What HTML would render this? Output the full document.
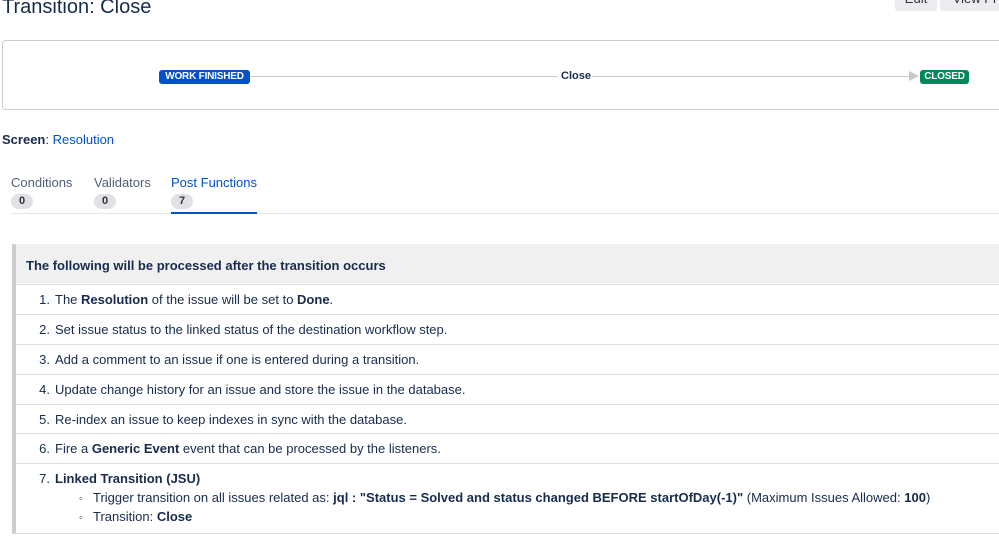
<!DOCTYPE html>
<html><head><style>
body{margin:0;width:999px;height:547px;overflow:hidden;background:#fff;font-family:"Liberation Sans",sans-serif;color:#172b4d;font-size:13px;position:relative}
.a{position:absolute}
h1{position:absolute;left:2px;top:-4px;margin:0;font-weight:normal;font-size:20px;color:#172b4d}
.btn{position:absolute;top:-8px;height:19px;background:#ebecf0;border-radius:3px;font-size:13px;color:#333;text-align:center;line-height:14px}
.lozenge{position:absolute;height:14px;line-height:14px;font-size:10px;font-weight:bold;color:#fff;border-radius:3px;top:70px;white-space:nowrap;text-align:center;letter-spacing:-0.2px}
.tab{position:absolute;top:175px;font-size:13px;color:#505f79}
.cnt{display:block;margin-top:4px;width:22px;height:15px;line-height:15px;text-align:center;border-radius:8px;background:#dfe1e6;font-size:11px;color:#333;font-weight:bold}
.tbl{position:absolute;left:12px;top:244px;width:1000px;height:288px;border-left:4px solid #ccc;border-top:1px solid #ddd;border-bottom:1px solid #ddd}
.row{position:absolute;left:0;right:0;border-top:1px solid #ddd}
.num{position:absolute;left:20px;width:14px;text-align:right}
.txt{position:absolute;left:39px;white-space:nowrap}
.sub{position:absolute;left:63px;white-space:nowrap}
.sub i{font-style:normal;display:inline-block;width:14px;font-size:11px}
</style></head><body>
<h1>Transition: Close</h1>
<div class="btn" style="left:895px;width:42px">Edit</div>
<div class="btn" style="left:940px;width:70px">View Pr</div>
<div class="a" style="left:2px;top:40px;width:1010px;height:68px;border:1px solid #ccc;border-radius:4px"></div>
<div class="a" style="left:250px;top:76px;width:308px;height:1px;background:#c8c8c8"></div>
<div class="a" style="left:592px;top:76px;width:318px;height:1px;background:#c8c8c8"></div>
<div class="a" style="left:909px;top:71px;width:0;height:0;border-left:10px solid #c8c8c8;border-top:5px solid transparent;border-bottom:5px solid transparent"></div>
<div class="lozenge" style="left:159px;width:91px;background:#0052cc">WORK FINISHED</div>
<div class="a" style="left:561px;top:70px;font-size:11px;font-weight:bold;color:#172b4d">Close</div>
<div class="lozenge" style="left:920px;width:49px;background:#00875a">CLOSED</div>
<div class="a" style="left:2px;top:132px"><b>Screen</b>: <span style="color:#0052cc">Resolution</span></div>
<div class="a" style="left:11px;top:213px;width:990px;height:1px;background:#e5e5e5"></div>
<div class="tab" style="left:11px">Conditions<span class="cnt">0</span></div>
<div class="tab" style="left:94px">Validators<span class="cnt">0</span></div>
<div class="tab" style="left:171px;color:#0052cc">Post Functions<span class="cnt">7</span></div>
<div class="a" style="left:171px;top:212px;width:86px;height:2px;background:#0052cc"></div>
<div class="tbl">
<div class="row" style="top:-1px;height:39px;background:#f0f0f0;border-top:none"><div class="a" style="left:10px;top:14px;font-weight:bold">The following will be processed after the transition occurs</div></div>
<div class="row" style="top:39px"><span class="num" style="top:7px">1.</span><span class="txt" style="top:7px">The <b>Resolution</b> of the issue will be set to <b>Done</b>.</span></div>
<div class="row" style="top:69px"><span class="num" style="top:7px">2.</span><span class="txt" style="top:7px">Set issue status to the linked status of the destination workflow step.</span></div>
<div class="row" style="top:99px"><span class="num" style="top:7px">3.</span><span class="txt" style="top:7px">Add a comment to an issue if one is entered during a transition.</span></div>
<div class="row" style="top:129px"><span class="num" style="top:7px">4.</span><span class="txt" style="top:7px">Update change history for an issue and store the issue in the database.</span></div>
<div class="row" style="top:159px"><span class="num" style="top:7px">5.</span><span class="txt" style="top:7px">Re-index an issue to keep indexes in sync with the database.</span></div>
<div class="row" style="top:188px"><span class="num" style="top:7px">6.</span><span class="txt" style="top:7px">Fire a <b>Generic Event</b> event that can be processed by the listeners.</span></div>
<div class="row" style="top:218px"><span class="num" style="top:7px">7.</span><span class="txt" style="top:7px"><b>Linked Transition (JSU)</b></span>
<span class="sub" style="top:26px"><i>◦</i>Trigger transition on all issues related as: <b>jql : "Status = Solved and status changed BEFORE startOfDay(-1)"</b> (Maximum Issues Allowed: <b>100</b>)</span>
<span class="sub" style="top:45px"><i>◦</i>Transition: <b>Close</b></span></div>
</div>
</body></html>
